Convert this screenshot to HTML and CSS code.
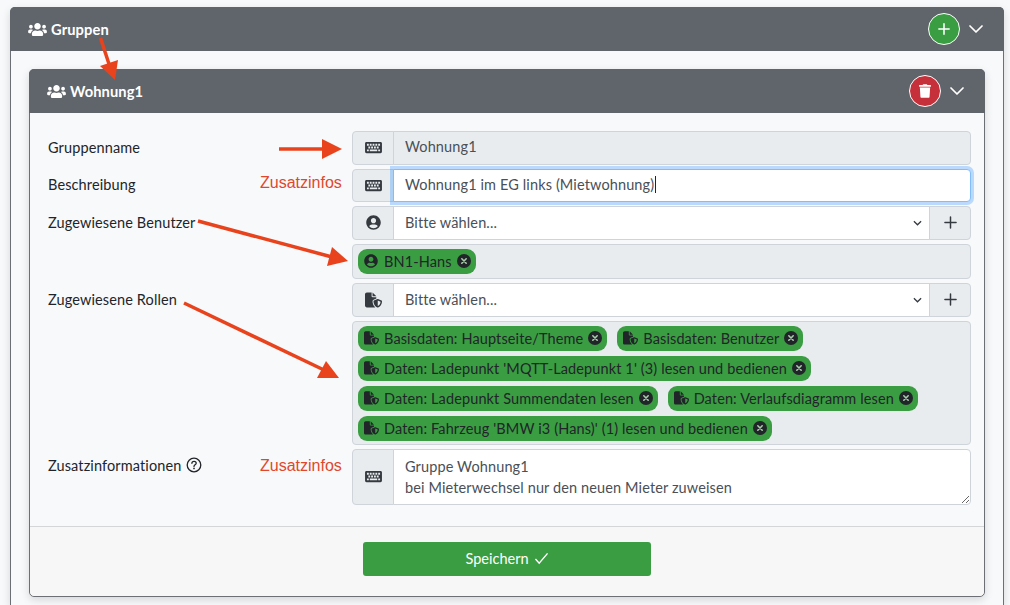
FILE: index.html
```html
<!DOCTYPE html>
<html lang="de">
<head>
    <meta charset="UTF-8">
    <meta name="viewport" content="width=device-width, initial-scale=1.0">
    <title>Gruppen</title>
    <link rel="stylesheet" href="styles.css">
</head>
<body>
    <svg class="icon-defs" width="0" height="0">
        <symbol id="i-users" viewBox="0 0 640 512"><path d="M96 224c35.3 0 64-28.7 64-64s-28.7-64-64-64-64 28.7-64 64 28.7 64 64 64zm448 0c35.3 0 64-28.7 64-64s-28.7-64-64-64-64 28.7-64 64 28.7 64 64 64zm32 32h-64c-17.6 0-33.5 7.1-45.1 18.6 40.3 22.1 68.9 62 75.1 109.4h66c17.7 0 32-14.3 32-32v-32c0-35.3-28.7-64-64-64zm-256 0c61.9 0 112-50.1 112-112S381.9 32 320 32 208 82.1 208 144s50.1 112 112 112zm76.8 32h-8.3c-20.8 10-43.9 16-68.5 16s-47.6-6-68.5-16h-8.3C179.6 288 128 339.6 128 403.2V432c0 26.5 21.5 48 48 48h288c26.5 0 48-21.5 48-48v-28.8c0-63.6-51.6-115.2-115.2-115.2zm-223.7-13.4C161.5 263.1 145.6 256 128 256H64c-35.3 0-64 28.7-64 64v32c0 17.7 14.3 32 32 32h65.9c6.3-47.4 34.9-87.3 75.2-109.4z"/></symbol>
        <symbol id="i-keyboard" viewBox="0 0 576 512"><path fill-rule="evenodd" d="M48 64h480c26.5 0 48 21.5 48 48v288c0 26.5-21.5 48-48 48H48c-26.5 0-48-21.5-48-48V112c0-26.5 21.500-48 48-48zM64 128v64h64v-64zm96 0v64h64v-64zm96 0v64h64v-64zm96 0v64h64v-64zm96 0v64h64v-64zM112 224v64h64v-64zm96 0v64h64v-64zm96 0v64h64v-64zm96 0v64h64v-64zM64 320v64h64v-64zm96 0v64h256v-64zm288 0v64h64v-64z"/></symbol>
        <symbol id="i-user" viewBox="0 0 496 512"><path d="M248 8C111 8 0 119 0 256s111 248 248 248 248-111 248-248S385 8 248 8zm0 96c48.6 0 88 39.4 88 88s-39.4 88-88 88-88-39.4-88-88 39.4-88 88-88zm0 344c-58.7 0-111.3-26.6-146.5-68.2 18.8-35.4 55.6-59.8 98.5-59.8 2.4 0 4.8.4 7.1 1.1 13 4.2 26.6 6.900 40.9 6.900 14.3 0 28-2.700 40.9-6.900 2.300-.7 4.700-1.100 7.100-1.100 42.900 0 79.700 24.400 98.500 59.800C359.300 421.400 306.700 448 248 448z"/></symbol>
        <symbol id="i-role" viewBox="0 0 576 512"><path d="M0 64C0 28.700 28.700 0 64 0H224V128c0 17.700 14.300 32 32 32H384v47l-92.800 37.100c-21.300 8.500-35.200 29.100-35.200 52c0 56.600 18.900 148 94.200 208c-6.500 2.500-13.600 4-20.200 4H64c-35.300 0-64-28.700-64-64V64zm384 64H256V0L384 128zm39.100 97.700c5.700-2.300 12.100-2.300 17.800 0l120 48C570 277.400 576 286.200 576 296c0 63.300-25.900 168.800-134.800 214.200c-5.900 2.500-12.600 2.500-18.500 0C313.900 464.800 288 359.300 288 296c0-9.800 6-18.600 15.100-22.300l120-48zM527.400 312L432 273.800V461.700c68.200-33 91.500-99 95.400-149.700z"/></symbol>
        <symbol id="i-remove" viewBox="0 0 16 16"><circle cx="8" cy="8" r="8" fill="#212529"/><path d="M5.500 5.500l5 5m0-5l-5 5" stroke="#a9cdac" stroke-width="1.800" stroke-linecap="round"/></symbol>
        <symbol id="i-chevron" viewBox="0 0 14 8"><path d="M1 1l6 6 6-6" fill="none" stroke="currentColor" stroke-width="1.700" stroke-linecap="round" stroke-linejoin="round"/></symbol>
    </svg>

    <section class="card card-outer">
        <header class="card-header">
            <div class="card-title">
                <svg class="icon-users"><use href="#i-users"/></svg>
                <span>Gruppen</span>
            </div>
            <div class="card-actions">
                <button class="round-btn round-add" type="button" aria-label="Neu">
                    <svg viewBox="0 0 14 14" width="12" height="12"><path d="M7 1v12M1 7h12" stroke="currentColor" stroke-width="1.800" stroke-linecap="round"/></svg>
                </button>
                <svg class="icon-chevron"><use href="#i-chevron"/></svg>
            </div>
        </header>

        <div class="card-outer-body">
            <section class="card card-inner">
                <header class="card-header">
                    <div class="card-title">
                        <svg class="icon-users"><use href="#i-users"/></svg>
                        <span>Wohnung1</span>
                    </div>
                    <div class="card-actions">
                        <button class="round-btn round-delete" type="button" aria-label="Löschen">
                            <svg viewBox="0 0 448 512" width="12" height="14"><path fill="currentColor" d="M432 32H312l-9.400-18.700A24 24 0 0 0 281.100 0H166.800a23.720 23.720 0 0 0-21.400 13.300L136 32H16A16 16 0 0 0 0 48v32a16 16 0 0 0 16 16h416a16 16 0 0 0 16-16V48a16 16 0 0 0-16-16zM53.200 467a48 48 0 0 0 47.900 45h245.800a48 48 0 0 0 47.900-45L416 128H32z"/></svg>
                        </button>
                        <svg class="icon-chevron"><use href="#i-chevron"/></svg>
                    </div>
                </header>

                <div class="form-grid">
                    <label class="form-label">Gruppenname</label>
                    <div class="input-group">
                        <span class="addon"><svg class="icon-key"><use href="#i-keyboard"/></svg></span>
                        <div class="control control-readonly">Wohnung1</div>
                    </div>

                    <label class="form-label">Beschreibung</label>
                    <div class="input-group">
                        <span class="addon"><svg class="icon-key"><use href="#i-keyboard"/></svg></span>
                        <div class="control control-focus">Wohnung1 im EG links (Mietwohnung)<span class="caret"></span></div>
                    </div>

                    <label class="form-label">Zugewiesene Benutzer</label>
                    <div class="input-group">
                        <span class="addon"><svg class="icon-addon"><use href="#i-user"/></svg></span>
                        <select class="control control-select"><option>Bitte wählen...</option></select>
                        <button class="add-btn" type="button">
                            <svg viewBox="0 0 14 14" width="13" height="13"><path d="M7 1v12M1 7h12" stroke="currentColor" stroke-width="1.600" stroke-linecap="round"/></svg>
                        </button>
                    </div>

                    <div class="chip-box chip-box-first">
                        <span class="chip"><svg class="chip-icon chip-icon-user"><use href="#i-user"/></svg>BN1-Hans<svg class="chip-x"><use href="#i-remove"/></svg></span>
                    </div>

                    <label class="form-label">Zugewiesene Rollen</label>
                    <div class="input-group">
                        <span class="addon"><svg class="icon-addon icon-addon-role"><use href="#i-role"/></svg></span>
                        <select class="control control-select"><option>Bitte wählen...</option></select>
                        <button class="add-btn" type="button">
                            <svg viewBox="0 0 14 14" width="13" height="13"><path d="M7 1v12M1 7h12" stroke="currentColor" stroke-width="1.600" stroke-linecap="round"/></svg>
                        </button>
                    </div>

                    <div class="chip-box">
                        <span class="chip"><svg class="chip-icon"><use href="#i-role"/></svg>Basisdaten: Hauptseite/Theme<svg class="chip-x"><use href="#i-remove"/></svg></span>
                        <span class="chip"><svg class="chip-icon"><use href="#i-role"/></svg>Basisdaten: Benutzer<svg class="chip-x"><use href="#i-remove"/></svg></span>
                        <span class="chip"><svg class="chip-icon"><use href="#i-role"/></svg>Daten: Ladepunkt 'MQTT-Ladepunkt 1' (3) lesen und bedienen<svg class="chip-x"><use href="#i-remove"/></svg></span>
                        <span class="chip"><svg class="chip-icon"><use href="#i-role"/></svg>Daten: Ladepunkt Summendaten lesen<svg class="chip-x"><use href="#i-remove"/></svg></span>
                        <span class="chip"><svg class="chip-icon"><use href="#i-role"/></svg>Daten: Verlaufsdiagramm lesen<svg class="chip-x"><use href="#i-remove"/></svg></span>
                        <span class="chip"><svg class="chip-icon"><use href="#i-role"/></svg>Daten: Fahrzeug 'BMW i3 (Hans)' (1) lesen und bedienen<svg class="chip-x"><use href="#i-remove"/></svg></span>
                    </div>

                    <label class="form-label">
                        Zusatzinformationen
                        <svg class="icon-help" viewBox="0 0 16 16"><circle cx="8" cy="8" r="6.800" fill="none" stroke="currentColor" stroke-width="1.300"/><path d="M5.900 6.300c0-1.200 1-2 2.200-2s2.100.8 2.100 1.900c0 1.600-2.200 1.600-2.200 3.200" fill="none" stroke="currentColor" stroke-width="1.300" stroke-linecap="round"/><circle cx="8" cy="11.400" r=".85" fill="currentColor"/></svg>
                    </label>
                    <div class="input-group input-group-area">
                        <span class="addon"><svg class="icon-key"><use href="#i-keyboard"/></svg></span>
                        <textarea class="control control-area">Gruppe Wohnung1
bei Mieterwechsel nur den neuen Mieter zuweisen</textarea>
                    </div>
                </div>

                <footer class="card-footer">
                    <button class="save-btn" type="button">Speichern
                        <svg viewBox="0 0 16 14" width="15" height="13"><path d="M1.500 7.500l4 4.500L14.500 1.500" fill="none" stroke="currentColor" stroke-width="1.500"/></svg>
                    </button>
                </footer>
            </section>
        </div>
    </section>

    <!-- red notes drawn over the screenshot -->
    <span class="note note-desc">Zusatzinfos</span>
    <span class="note note-info">Zusatzinfos</span>
    <svg class="arrows" viewBox="0 0 1010 605">
        <line x1="100.500" y1="38" x2="109" y2="64"/>
        <polygon points="115,80 100,66 118,60"/>
        <line x1="279" y1="149" x2="324" y2="149"/>
        <polygon points="342,149 322,139 322,159"/>
        <line x1="198" y1="221" x2="332" y2="257"/>
        <polygon points="348,261 332,247 327,266"/>
        <line x1="184" y1="303" x2="324" y2="370"/>
        <polygon points="339,378 326,361 317,378"/>
    </svg>
</body>
</html>
```

FILE: styles.css
```css
html, body {
    height: 605px;
    overflow: hidden;
}
body {
    font-family: 'Lato', 'Noto Sans', sans-serif;
    font-size: 14.5px;
    letter-spacing: 0.12px;
    background-color: #f8f9fa;
    color: #212529;
    margin: 0;
    padding: 7px 6px 0 10px;
    box-sizing: border-box;
    position: relative;
}
.icon-defs {
    position: absolute;
}

.card {
    border: 1px solid #6c7076;
    border-radius: 5px;
    background-color: #f8f9fb;
    box-shadow: 0 3px 9px rgba(0, 0, 0, 0.14);
}
.card-outer {
    height: 598px;
    box-sizing: border-box;
    border-bottom: none;
    border-radius: 5px 5px 0 0;
}
.card-outer-body {
    padding: 18px 18px 0;
}
.card-inner {
    height: 526px;
    display: flex;
    flex-direction: column;
}
.card-header {
    display: flex;
    justify-content: space-between;
    align-items: center;
    height: 44px;
    margin: -1px -1px 0;
    padding: 0 21px 0 18px;
    background-color: #60656b;
    color: white;
    border-radius: 5px 5px 0 0;
    box-sizing: border-box;
    flex-shrink: 0;
}
.card-title {
    display: flex;
    align-items: center;
    gap: 4px;
    font-weight: 700;
    font-size: 14.7px;
    letter-spacing: 0.1px;
}
.icon-users {
    width: 19px;
    height: 15px;
    fill: white;
}
.card-actions {
    display: flex;
    align-items: center;
    gap: 9px;
}
.icon-chevron {
    width: 14px;
    height: 8px;
    color: white;
}
.round-btn {
    display: flex;
    align-items: center;
    justify-content: center;
    width: 32px;
    height: 32px;
    padding: 0;
    border: 1px solid white;
    border-radius: 50%;
    color: white;
}
.round-add {
    background-color: #3a9d42;
}
.round-delete {
    background-color: #c5303a;
}

.form-grid {
    display: grid;
    grid-template-columns: 304px 1fr;
    row-gap: 4px;
    padding: 18px 13px 21px 18px;
}
.form-label {
    grid-column: 1;
    display: flex;
    align-items: center;
    gap: 5px;
    height: 33.5px;
    padding-bottom: 1px;
    box-sizing: border-box;
}
.input-group {
    grid-column: 2;
    display: flex;
    height: 33.5px;
}
.input-group-area {
    height: 55.5px;
}
.addon {
    display: flex;
    align-items: center;
    justify-content: center;
    width: 42px;
    box-sizing: border-box;
    flex-shrink: 0;
    background-color: #e9ecef;
    border: 1px solid #ced4da;
    border-radius: 4px 0 0 4px;
}
.icon-key {
    width: 17px;
    height: 15px;
    fill: #343a40;
}
.icon-addon {
    width: 15px;
    height: 15px;
    fill: #343a40;
}
.icon-addon-role {
    width: 17px;
    height: 16px;
}
.control {
    flex: 1;
    min-width: 0;
    box-sizing: border-box;
    padding: 0 11px;
    margin: 0 0 0 -1px;
    font-family: inherit;
    font-size: 14.5px;
    letter-spacing: 0.12px;
    line-height: 30px;
    color: #495057;
    background-color: white;
    border: 1px solid #ced4da;
    border-radius: 0 4px 4px 0;
}
.control-readonly {
    background-color: #e9ecef;
}
.control-focus {
    border-color: #80bdff;
    box-shadow: 0 0 0 3px rgba(0, 123, 255, 0.25);
    position: relative;
}
.caret {
    display: inline-block;
    width: 1px;
    height: 17px;
    margin-left: 1px;
    vertical-align: -3px;
    background-color: #212529;
}
.control-select {
    appearance: none;
    border-radius: 0;
    background-image: url("data:image/svg+xml,%3Csvg xmlns='http://www.w3.org/2000/svg' viewBox='0 0 10 6'%3E%3Cpath d='M1 1l4 4 4-4' fill='none' stroke='%23343a40' stroke-width='1.400'/%3E%3C/svg%3E");
    background-repeat: no-repeat;
    background-position: right 7px center;
    background-size: 9px 6px;
}
.control-area {
    display: block;
    padding: 6px 11px 0;
    line-height: 21px;
    resize: both;
    overflow: hidden;
}
.add-btn {
    display: flex;
    align-items: center;
    justify-content: center;
    width: 42px;
    flex-shrink: 0;
    margin-left: -1px;
    padding: 0;
    color: #343a40;
    background-color: #e9ecef;
    border: 1px solid #ced4da;
    border-radius: 0 4px 4px 0;
}

.chip-box {
    grid-column: 2;
    display: flex;
    flex-wrap: wrap;
    gap: 5px 10px;
    box-sizing: border-box;
    height: 124.5px;
    padding: 4px 5px;
    background-color: #e9ecef;
    border: 1px solid #ced4da;
    border-radius: 4px;
}
.chip-box-first {
    height: 35.500px;
}
.chip {
    display: inline-flex;
    align-items: center;
    height: 25px;
    padding: 0 5px 0 6px;
    color: #212529;
    background-color: #3a9d42;
    border-radius: 9px;
    white-space: nowrap;
}
.chip-icon {
    width: 15px;
    height: 14px;
    margin-right: 5px;
    fill: #212529;
}
.chip-icon-user {
    width: 14px;
    height: 14px;
    margin-right: 6px;
}
.chip-x {
    width: 14px;
    height: 14px;
    margin-left: 5px;
}
.icon-help {
    width: 16px;
    height: 16px;
}

.card-footer {
    display: flex;
    justify-content: center;
    flex: 1;
    padding-top: 15px;
    background-color: #f7f7f7;
    border-top: 1px solid #d5d6d8;
    border-radius: 0 0 5px 5px;
}
.save-btn {
    display: flex;
    align-items: center;
    justify-content: center;
    gap: 5px;
    width: 288px;
    height: 34px;
    font-family: inherit;
    font-size: 14.5px;
    color: white;
    background-color: #3a9d42;
    border: none;
    border-radius: 3px;
}

.note {
    position: absolute;
    left: 260px;
    font-family: 'Liberation Sans', Arial, sans-serif;
    font-size: 16px;
    letter-spacing: 0;
    color: #e0472b;
}
.note-desc {
    top: 174px;
}
.note-info {
    top: 457px;
}
.arrows {
    position: absolute;
    top: 0;
    left: 0;
    width: 1010px;
    height: 605px;
    pointer-events: none;
}
.arrows line {
    stroke: #e8431c;
    stroke-width: 3.500;
}
.arrows polygon {
    fill: #e8431c;
}
```
